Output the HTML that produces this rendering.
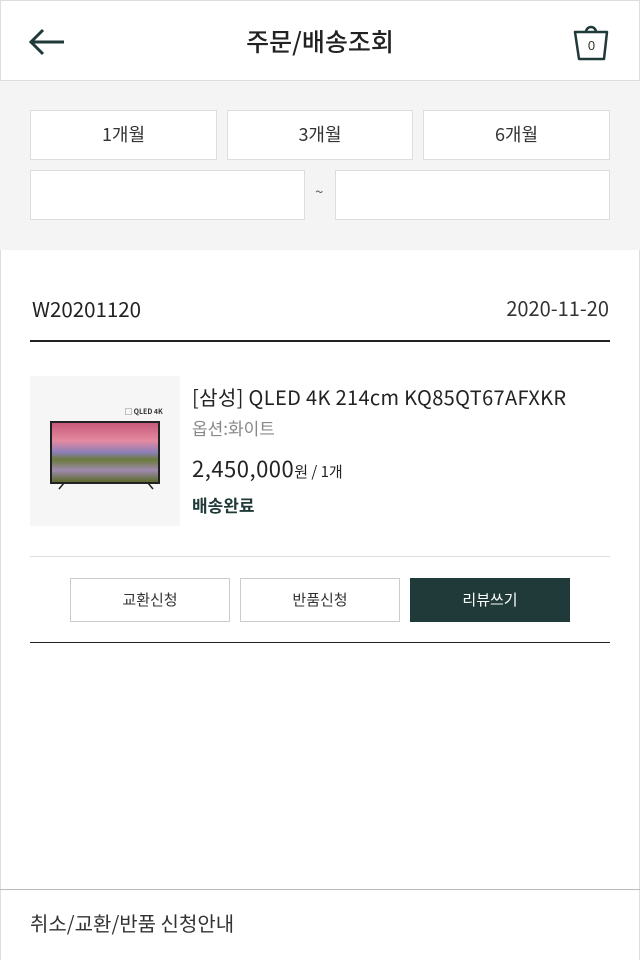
<!DOCTYPE html>
<html><head><meta charset="utf-8"><style>
*{margin:0;padding:0;box-sizing:border-box}
body{width:640px;height:960px;background:#fff;font-family:"Noto Sans CJK KR","Liberation Sans",sans-serif;color:#222;position:relative;overflow:hidden}
.frame{position:absolute;inset:0;border:1px solid #ddd;border-bottom:none}
.hdr{position:absolute;top:0;left:0;width:640px;height:81px;border-bottom:1px solid #ddd}
.hdr h1{position:absolute;top:23px;width:100%;text-align:center;font-size:25px;font-weight:500;color:#222;line-height:36px}
.filter{position:absolute;top:81px;left:0;width:640px;height:169px;background:#f4f4f4}
.b{position:absolute;background:#fff;border:1px solid #ddd;text-align:center;font-size:18px;line-height:46px;color:#333}
.abs{position:absolute;line-height:1.3}
.btn{position:absolute;top:578px;width:160px;height:44px;border:1px solid #ccc;text-align:center;line-height:41px;font-size:15px;color:#333;background:#fff}
</style></head><body>
<div class="frame"></div>
<div class="hdr">
<svg class="abs" style="left:28px;top:28px" width="38" height="28" viewBox="0 0 38 28"><path d="M36 14H3M15 2L3 14l12 12" fill="none" stroke="#1f3a38" stroke-width="3"/></svg>
<h1>주문/배송조회</h1>
<svg class="abs" style="left:572px;top:22px" width="40" height="40" viewBox="0 0 40 40"><path d="M14 10a5 5 0 0 1 10 0" fill="none" stroke="#1f3a38" stroke-width="2.5"/><path d="M3 10h32l-3 27H7z" fill="none" stroke="#1f3a38" stroke-width="2.5" stroke-linejoin="round"/><text x="19.5" y="28" font-size="13" text-anchor="middle" fill="#333" font-family="Liberation Sans">0</text></svg>
</div>
<div class="filter"></div>
<div class="b" style="left:30px;top:110px;width:187px;height:50px">1개월</div>
<div class="b" style="left:227px;top:110px;width:186px;height:50px">3개월</div>
<div class="b" style="left:423px;top:110px;width:187px;height:50px">6개월</div>
<div class="b" style="left:30px;top:170px;width:275px;height:50px"></div>
<div class="abs" style="left:315px;top:182px;font-size:15px;color:#555">~</div>
<div class="b" style="left:335px;top:170px;width:275px;height:50px"></div>
<div class="abs" style="left:32px;top:295px;font-size:20.5px;color:#222">W20201120</div>
<div class="abs" style="right:31px;top:295px;font-size:20px;color:#333">2020-11-20</div>
<div class="abs" style="left:30px;top:340px;width:580px;height:2px;background:#222"></div>
<div class="abs" style="left:30px;top:376px;width:150px;height:150px;background:#f6f6f6">
<div class="abs" style="left:20px;top:45px;width:110px;height:63px;background:#222;padding:2px"><div style="width:100%;height:100%;background:linear-gradient(#c75a7a 0%,#e48aa0 30%,#8b7fb8 50%,#6a7a3a 62%,#a08ab0 80%,#5a6a2a 100%)"></div></div>
<svg class="abs" style="left:28px;top:106px" width="96" height="10"><path d="M6 1L1 7M90 1l5 6" stroke="#222" stroke-width="1.5"/></svg>
<div class="abs" style="left:95px;top:32px;font-size:7px;font-weight:bold;color:#333">▢ QLED 4K</div>
</div>
<div class="abs" style="left:192px;top:384px;font-size:20px;letter-spacing:0.35px;color:#222">[삼성] QLED 4K 214cm KQ85QT67AFXKR</div>
<div class="abs" style="left:192px;top:417px;font-size:17px;color:#888">옵션:화이트</div>
<div class="abs" style="left:192px;top:454px;font-size:22px;letter-spacing:0.5px;color:#222">2,450,000<span style="font-size:15px;letter-spacing:0">원 / 1개</span></div>
<div class="abs" style="left:192px;top:494px;font-size:17px;font-weight:bold;color:#1f3a38">배송완료</div>
<div class="abs" style="left:30px;top:556px;width:580px;height:1px;background:#ddd"></div>
<div class="btn" style="left:70px">교환신청</div>
<div class="btn" style="left:240px">반품신청</div>
<div class="btn" style="left:410px;background:#1f3a38;border-color:#1f3a38;color:#fff">리뷰쓰기</div>
<div class="abs" style="left:30px;top:642px;width:580px;height:1px;background:#222"></div>
<div class="abs" style="left:0;top:889px;width:640px;height:1px;background:#bbb"></div>
<div class="abs" style="left:30px;top:910px;font-size:20px;color:#333">취소/교환/반품 신청안내</div>
</body></html>
